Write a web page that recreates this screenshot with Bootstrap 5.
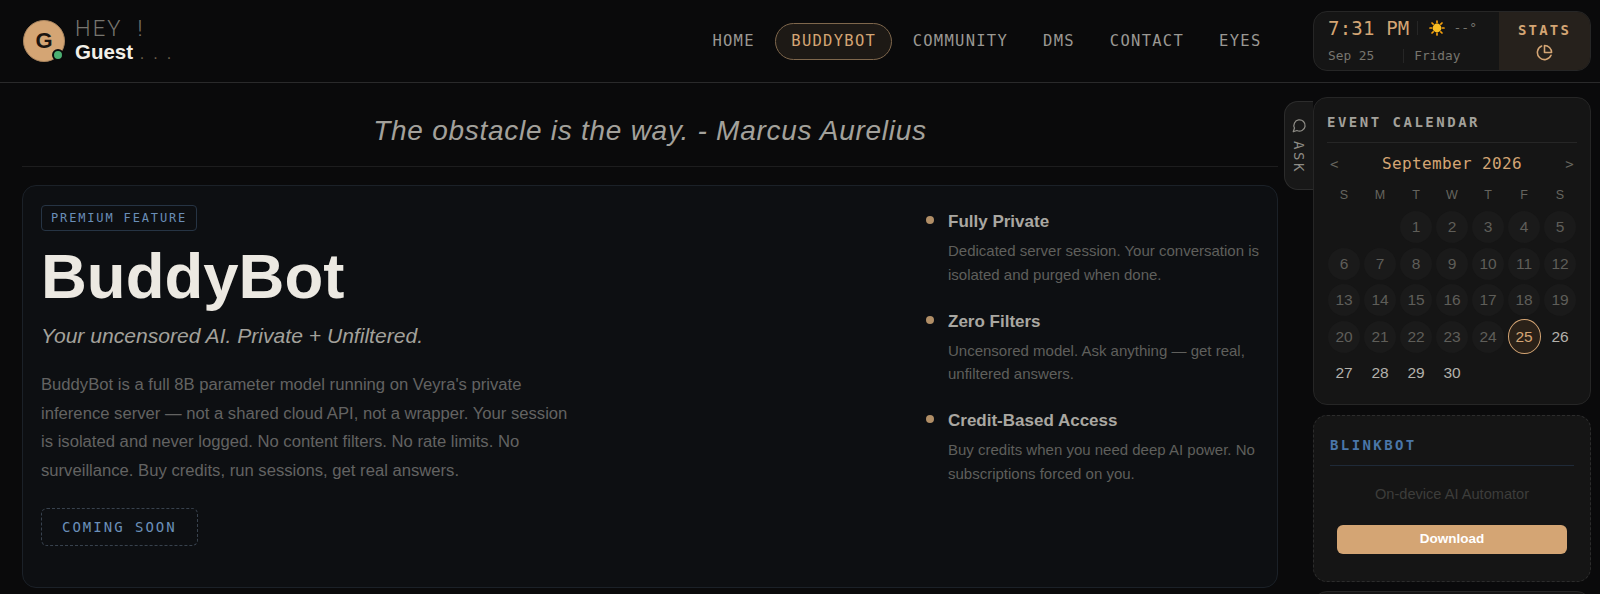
<!DOCTYPE html>
<html lang="en">
<head>
  <meta charset="UTF-8">
  <title>BuddyBot</title>
  <meta name="viewport" content="width=device-width, initial-scale=1">
  <link href="https://cdn.jsdelivr.net/npm/bootstrap@5.3.3/dist/css/bootstrap.min.css" rel="stylesheet">
  <style>
    html, body { height: 594px; overflow: hidden; }
    body {
      background: #0a0a0b;
      color: #ece9e2;
      font-family: "Liberation Sans", Arial, sans-serif;
    }
    .mono { font-family: "DejaVu Sans Mono", monospace; }

    /* header */
    .top-bar { height: 83px; border-bottom: 1px solid #2a2a2b; padding: 0 9px 0 23px; }
    .avatar-g {
      width: 42px; height: 42px; border-radius: 50%;
      background: #d4a574; color: #1a1410;
      font-size: 22px; font-weight: 700; line-height: 40px; text-align: center;
      position: relative; border: 1px solid #a9855f;
    }
    .avatar-dot {
      position: absolute; right: 0; bottom: 0;
      width: 12px; height: 12px; border-radius: 50%;
      background: #4caf72; border: 2px solid #0a0a0b;
    }
    .name-block { margin-left: 10px; }
    .hey-line { font-family: Roboto, sans-serif; font-size: 22px; font-weight: 300; line-height: 24px; letter-spacing: 2.1px; color: #77756f; white-space: pre; padding-top: 2px; }
    .guest-line { font-size: 20.5px; font-weight: 700; line-height: 26px; color: #f2efe8; margin-top: -2px; }
    .guest-line span { font-weight: 400; color: #6b5d4a; font-size: 16px; letter-spacing: 2.3px; }
    .top-link {
      font-size: 15.5px; letter-spacing: 1.27px; color: #9a9893;
      padding: 0 16.5px; line-height: 35px; border: 1px solid transparent; border-radius: 19px;
      text-decoration: none;
    }
    .top-link.on { color: #d4a574; border-color: #7f674c; background: #1d1915; padding: 0 15px; margin: 0 3px; }
    .top-nav { margin-right: 34px; }

    .clock-box {
      width: 278px; height: 60px; margin-top: -1px;
      background: #151515; border: 1px solid #262626; border-radius: 14px; overflow: hidden;
    }
    .clock-left { flex: 1; padding: 2px 0 0 14px; }
    .clock-time { font-size: 19px; letter-spacing: .2px; color: #d4a574; line-height: 28px; }
    .clock-sep { width: 1px; height: 14px; background: #262626; }
    .clock-sun { margin-left: 3px; }
    .clock-temp { font-size: 13px; color: #77756f; }
    .clock-date { font-size: 12.8px; color: #77756f; line-height: 22px; margin-top: 3px; }
    .clock-date-sep { margin-left: 29px; margin-right: 10px; }
    .clock-stats {
      width: 91px; background: #26211c; color: #d4a574;
      font-size: 14px; font-weight: 700; letter-spacing: 2.2px; line-height: 18px; padding-top: 9px;
    }
    .stats-ico { margin-top: 5px; }

    /* main column */
    .main-col { width: 1278px; padding-left: 22px; }
    .quote-bar {
      height: 84px; border-bottom: 1px solid #1d1d1e;
      font-size: 28px; font-style: italic; letter-spacing: .73px; color: #a3a19b;
      line-height: 96px; text-align: center;
    }
    .hero-box {
      margin-top: 18px; height: 403px;
      background: #0d0f12; border: 1px solid #1b2128; border-radius: 14px;
      padding: 19px 18px 0;
    }
    .hero-left { width: 885px; flex: none; }
    .prem-tag {
      display: inline-block; font-size: 12px; letter-spacing: 1.85px; color: #6a8eb8;
      border: 1px solid #263444; border-radius: 4px; padding: 0 9px; line-height: 24px;
    }
    .hero-title { font-size: 63.5px; font-weight: 700; line-height: 74px; margin: 8px 0 0; color: #ece9e2; }
    .hero-sub { font-size: 21.1px; font-style: italic; color: #a3a19b; margin: 8px 0 0; line-height: 30px; }
    .hero-text { font-size: 16.65px; line-height: 28.6px; color: #636362; width: 530px; margin: 20px 0 0; }
    .soon-btn {
      display: inline-block; margin-top: 23px; font-size: 14px; letter-spacing: 2px; color: #6b90ba;
      border: 1px dashed #38424e; border-radius: 6px; padding: 0 20px; line-height: 36px;
    }
    .perk-list { width: 336px; flex: none; padding-top: 6px; }
    .perk-row { margin-bottom: 24.5px; }
    .perk-dot { width: 8px; height: 8px; border-radius: 50%; background: #b08e66; margin: 5px 14px 0 0; flex: none; }
    .perk-name { font-size: 17px; font-weight: 700; color: #a9a7a1; line-height: 22px; margin-bottom: 6px; }
    .perk-desc { font-size: 15px; line-height: 23.5px; color: #5f5f5c; }

    /* right side */
    .ask-tab {
      width: 29px; height: 89px; margin: 18px 0 0 6px; flex: none;
      background: #181818; border: 1px solid #2c2c2c; border-right: 0; border-radius: 14px 0 0 14px;
      color: #8e8c86; font-size: 14px; letter-spacing: 2.6px;
      writing-mode: vertical-rl; padding: 16px 0 0; line-height: 22px;
    }
    .ask-ico { margin-bottom: 8px; }
    .side-col { width: 278px; height: 497px; overflow: hidden; flex: none; margin-top: 14px; }
    .side-box { background: #151515; border: 1px solid #262626; border-radius: 14px; }
    .cal-box { height: 308px; padding: 15px 13px 0; }
    .cal-head { font-size: 14px; font-weight: 700; letter-spacing: 2.5px; color: #a3a19b; line-height: 18px; padding-bottom: 11px; border-bottom: 1px solid #262626; }
    .cal-nav { color: #d4a574; font-size: 16px; letter-spacing: .37px; line-height: 20px; margin-top: 11px; padding: 0 3px; }
    .cal-nav i { font-style: normal; color: #66655f; font-size: 14px; }
    .cal-grid { display: grid; grid-template-columns: repeat(7, 36px); row-gap: 4.5px; align-items: center; margin: 11px 0 0 -1px; justify-items: center; }
    .cal-wd { font-size: 12.5px; color: #66655f; line-height: 20px; margin-bottom: 1.5px; }
    .cal-day { width: 32px; height: 32px; border-radius: 50%; background: #1a1a1a; color: #5f5e59; font-size: 15.5px; line-height: 32px; text-align: center; }
    .cal-day.empty { background: none; }
    .cal-day.up { background: none; color: #b3b1ab; }
    .cal-day.today { width: 33px; height: 35px; margin: -2px 0; background: #2a2118; border: 1px solid #d4a574; color: #d4a574; line-height: 33px; }
    .blink-box { height: 167px; margin-top: 10px; padding: 20px 16px 0; border: 1px dashed #2c2c2c; }
    .blink-head { font-size: 14px; font-weight: 700; letter-spacing: 2.4px; color: #4a76a8; line-height: 18px; padding-bottom: 11px; border-bottom: 1px solid #1f2a38; }
    .blink-text { text-align: center; color: #3d3d3b; font-size: 14.6px; line-height: 20px; margin-top: 18px; }
    .blink-btn {
      display: block; width: 230px; margin: 21px auto 0; height: 29px; padding: 0;
      background: #d4a574; border: 0; border-radius: 6px; color: #fff; font-size: 13.5px; font-weight: 700;
    }
    .blink-btn:hover { background: #d4a574; color: #fff; }
    .next-box { height: 60px; margin-top: 9px; }
  </style>
</head>
<body>
  <header class="top-bar d-flex align-items-center">
    <div class="d-flex align-items-center">
      <div class="avatar-g">G<span class="avatar-dot"></span></div>
      <div class="name-block">
        <div class="hey-line">HEY  !</div>
        <div class="guest-line">Guest<span> . . .</span></div>
      </div>
    </div>
    <nav class="top-nav d-flex align-items-center ms-auto mono">
      <a class="top-link" href="#">HOME</a>
      <a class="top-link on" href="#">BUDDYBOT</a>
      <a class="top-link" href="#">COMMUNITY</a>
      <a class="top-link" href="#">DMS</a>
      <a class="top-link" href="#">CONTACT</a>
      <a class="top-link" href="#">EYES</a>
    </nav>
    <div class="clock-box d-flex mono">
      <div class="clock-left">
        <div class="d-flex align-items-center">
          <span class="clock-time">7:31 PM</span>
          <span class="clock-sep mx-2"></span>
          <svg class="clock-sun" width="16" height="16" viewBox="0 0 16 16">
            <circle cx="8" cy="8" r="4.4" fill="#fbbf24"/>
            <g stroke="#f59e0b" stroke-width="1.7" stroke-linecap="round">
              <path d="M8 1v1.6M8 13.4V15M1 8h1.6M13.4 8H15M3 3l1.2 1.2M11.8 11.8L13 13M3 13l1.2-1.2M11.8 4.2L13 3"/>
            </g>
          </svg>
          <span class="clock-temp ms-2">--°</span>
        </div>
        <div class="clock-date d-flex align-items-center">
          <span>Sep 25</span>
          <span class="clock-sep clock-date-sep"></span>
          <span>Friday</span>
        </div>
      </div>
      <div class="clock-stats text-center">
        STATS
        <svg class="stats-ico d-block mx-auto" width="17" height="17" viewBox="0 0 24 24" fill="none" stroke="currentColor" stroke-width="2.2" stroke-linecap="round" stroke-linejoin="round">
          <path d="M21.21 15.89A10 10 0 1 1 8 2.83"/>
          <path d="M22 12A10 10 0 0 0 12 2v10z"/>
        </svg>
      </div>
    </div>
  </header>

  <div class="d-flex">
    <main class="main-col flex-shrink-0">
      <div class="quote-bar">The obstacle is the way. - Marcus Aurelius</div>
      <section class="hero-box d-flex">
        <div class="hero-left">
          <span class="prem-tag mono">PREMIUM FEATURE</span>
          <h1 class="hero-title">BuddyBot</h1>
          <p class="hero-sub">Your uncensored AI. Private + Unfiltered.</p>
          <p class="hero-text">BuddyBot is a full 8B parameter model running on Veyra's private inference server — not a shared cloud API, not a wrapper. Your session is isolated and never logged. No content filters. No rate limits. No surveillance. Buy credits, run sessions, get real answers.</p>
          <span class="soon-btn mono">COMING SOON</span>
        </div>
        <div class="perk-list">
          <div class="perk-row d-flex">
            <span class="perk-dot"></span>
            <div><div class="perk-name">Fully Private</div><div class="perk-desc">Dedicated server session. Your conversation is isolated and purged when done.</div></div>
          </div>
          <div class="perk-row d-flex">
            <span class="perk-dot"></span>
            <div><div class="perk-name">Zero Filters</div><div class="perk-desc">Uncensored model. Ask anything — get real, unfiltered answers.</div></div>
          </div>
          <div class="perk-row d-flex">
            <span class="perk-dot"></span>
            <div><div class="perk-name">Credit-Based Access</div><div class="perk-desc">Buy credits when you need deep AI power. No subscriptions forced on you.</div></div>
          </div>
        </div>
      </section>
    </main>

    <div class="ask-tab mono d-flex align-items-center">
      <svg class="ask-ico" width="15" height="15" viewBox="0 0 24 24" fill="none" stroke="currentColor" stroke-width="2" stroke-linecap="round" stroke-linejoin="round">
        <path d="M7.9 20A9 9 0 1 0 4 16.1L2 22Z"/>
      </svg>
      ASK
    </div>

    <aside class="side-col">
      <div class="side-box cal-box">
        <div class="cal-head mono">EVENT CALENDAR</div>
        <div class="cal-nav mono d-flex justify-content-between align-items-center">
          <i>&lt;</i><span>September 2026</span><i>&gt;</i>
        </div>
        <div class="cal-grid" id="cal-grid"></div>
      </div>
      <div class="side-box blink-box">
        <div class="blink-head mono">BLINKBOT</div>
        <div class="blink-text">On-device AI Automator</div>
        <button class="btn blink-btn">Download</button>
      </div>
      <div class="side-box next-box"></div>
    </aside>
  </div>

  <script>
    const grid = document.getElementById('cal-grid');
    let html = '';
    ['S', 'M', 'T', 'W', 'T', 'F', 'S'].forEach(d => { html += `<div class="cal-wd">${d}</div>`; });
    // September 2026 starts on a Tuesday
    html += '<div class="cal-day empty"></div><div class="cal-day empty"></div>';
    for (let d = 1; d <= 30; d++) {
      let cls = 'cal-day';
      if (d === 25) cls += ' today';
      if (d > 25) cls += ' up';
      html += `<div class="${cls}">${d}</div>`;
    }
    grid.innerHTML = html;
  </script>
  <script src="https://cdn.jsdelivr.net/npm/bootstrap@5.3.3/dist/js/bootstrap.bundle.min.js"></script>
</body>
</html>
